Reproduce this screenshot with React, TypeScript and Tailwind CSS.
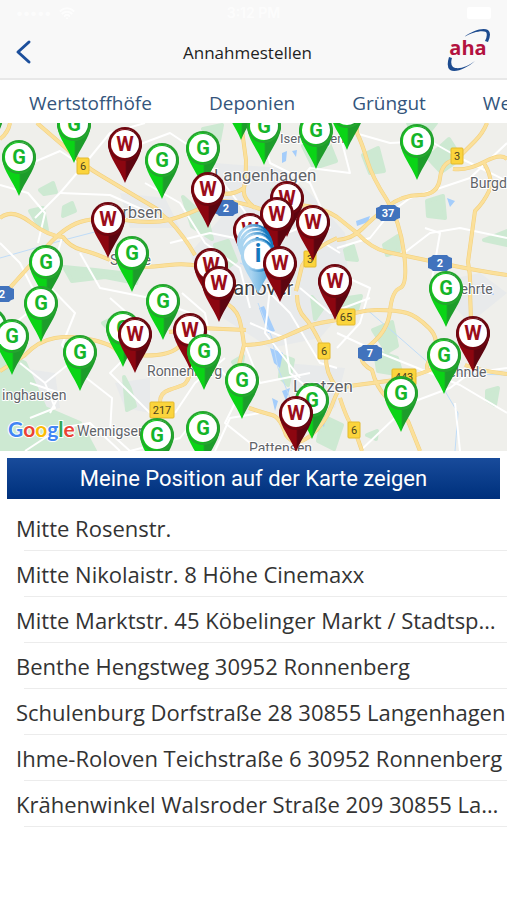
import { Wifi } from 'lucide-react';

type PinKind = 'green' | 'red' | 'info';

const tabs = ['Wertstoffhöfe', 'Deponien', 'Grüngut', 'We'];

const places = [
  'Mitte Rosenstr.',
  'Mitte Nikolaistr. 8 Höhe Cinemaxx',
  'Mitte Marktstr. 45 Köbelinger Markt / Stadtsparkasse',
  'Benthe Hengstweg 30952 Ronnenberg',
  'Schulenburg Dorfstraße 28 30855 Langenhagen',
  'Ihme-Roloven Teichstraße 6 30952 Ronnenberg',
  'Krähenwinkel Walsroder Straße 209 30855 Langenhagen',
];

// x and y are the centre of the pin's head, later entries lie on top
const pins: [PinKind, number, number][] = [
  ['green', -14, -6],
  ['green', 241, -22],
  ['green', 347, -12],
  ['green', 74, 1],
  ['green', 264, 3],
  ['green', 316, 7],
  ['green', 417, 18],
  ['red', 125, 21],
  ['green', 203, 25],
  ['green', 19, 34],
  ['green', 162, 37],
  ['red', 208, 66],
  ['red', 287, 75],
  ['red', 277, 91],
  ['red', 108, 96],
  ['red', 313, 99],
  ['red', 250, 107],
  ['info', 254, 118],
  ['info', 256, 122],
  ['info', 257, 126],
  ['green', 132, 130],
  ['info', 258, 132],
  ['green', 46, 139],
  ['red', 280, 140],
  ['red', 211, 142],
  ['red', 335, 158],
  ['red', 219, 160],
  ['green', 446, 165],
  ['green', 163, 178],
  ['green', 41, 180],
  ['green', -10, 202],
  ['green', 123, 205],
  ['red', 190, 207],
  ['red', 473, 210],
  ['red', 135, 211],
  ['green', 12, 213],
  ['green', 204, 228],
  ['green', 80, 229],
  ['green', 444, 232],
  ['green', 242, 257],
  ['green', 401, 270],
  ['green', 312, 277],
  ['red', 296, 290],
  ['green', 203, 305],
  ['green', 157, 312],
];

const pinColors = {
  green: { ring: '#25a52f', letter: '#15b52a', text: 'G' },
  red: { ring: '#6d0710', letter: '#9b0d1a', text: 'W' },
  info: { ring: 'url(#ring-info)', letter: '#1377bd', text: 'i' },
};

const labels: [string, number, number, number][] = [
  ['Isernhagen', 280, 20, 13],
  ['Langenhagen', 214, 58, 17],
  ['Garbsen', 103, 95, 16],
  ['Seelze', 110, 142, 14],
  ['Burgdorf', 470, 65, 14],
  ['Lehrte', 453, 171, 14],
  ['Ronnenberg', 147, 253, 14],
  ['Sehnde', 440, 254, 14],
  ['inghausen', 2, 277, 14],
  ['Wennigsen', 77, 313, 14],
  ['Laatzen', 293, 269, 17],
  ['Pattensen', 249, 330, 14],
];

const shields: [string, number, number][] = [
  ['6', 83, 43],
  ['3', 457, 33],
  ['3', 310, 136],
  ['65', 346, 194],
  ['6', 324, 228],
  ['443', 404, 254],
  ['217', 162, 287],
  ['6', 354, 307],
];

const motorways: [string, number, number][] = [
  ['2', 226, 85],
  ['37', 388, 90],
  ['2', 440, 140],
  ['7', 370, 230],
  ['2', 2, 171],
];

const mainRoads = [
  'M10 0Q8 10 0 16',
  'M37 0L66 25Q84 43 100 52L157 86Q163 94 169 97',
  'M7 168L43 128Q62 105 80 99T125 97T169 97Q190 91 207 82T260 86T300 82Q322 84 337 94L357 110Q372 126 387 129T440 140T507 152',
  'M0 95Q12 85 30 99T63 114Q70 124 82 127T110 137T140 144T169 142T200 143L215 152',
  'M241 0L246 37Q246 55 244 65T255 85M212 66Q228 76 244 65',
  'M169 97Q184 113 195 132',
  'M337 115Q310 127 302 143L296 168',
  'M357 0L357 10Q362 20 367 37T387 77Q400 98 404 130T400 165T390 188T370 222T372 247Q376 264 387 275T408 298L420 328',
  'M337 117Q352 116 362 106T387 84T420 72T440 55T456 37L475 18Q483 10 487 0',
  'M453 46Q467 48 484 39T507 36',
  'M484 40Q494 57 489 68T475 88L468 139Q471 155 470 168L471 197',
  'M337 197Q357 187 377 187T407 190T429 205T432 232T430 247Q410 255 395 257T357 262T337 268',
  'M465 242Q480 248 507 251',
  'M340 275Q348 300 354 305L362 328',
  'M219 175Q236 185 239 195T244 222L237 250',
  'M169 209L200 205L246 207',
  'M244 222Q266 222 286 213T312 202T337 197',
  'M297 172Q297 187 305 195T326 232Q325 250 337 265',
  'M249 285Q264 290 272 292T286 312Q295 325 310 313T332 282T340 270',
  'M160 279Q160 270 169 267T183 262T192 245',
  'M0 248L25 232Q38 218 55 215T93 217T117 228Q135 234 157 232T185 215',
];

const minorRoads = [
  'M20 45L60 28L83 43L60 70L35 95',
  'M60 70L110 72L150 90M83 43L110 10L145 0',
  'M0 62L28 70L45 90L38 120',
  'M62 115L48 162L75 190L62 222L80 250L112 275L110 310L130 328',
  'M80 130L100 165L150 175L190 190',
  'M0 120L20 140L40 180L0 212',
  'M110 175L150 210L110 250L150 290',
  'M130 25L170 10L200 30L235 75L260 110',
  'M145 60L180 80L205 120L240 145L250 185',
  'M170 120L210 110L260 120L300 105L340 130',
  'M260 0L270 40L310 60L330 105',
  'M285 75L310 45L350 50L337 0',
  'M355 10L390 20L430 18L460 35L507 58',
  'M337 125L370 115L390 90L410 75L470 55L507 20',
  'M404 130L430 110L460 105L507 115',
  'M430 168L440 110L425 105',
  'M337 150L370 165L360 200L337 225',
  'M337 210L380 230L430 250L460 262L507 290',
  'M410 280L450 265L470 250L507 245',
  'M360 328L400 290L410 255M455 280L460 328',
  'M182 170L205 190L215 240L240 270L225 300L260 328',
  'M250 200L285 215L290 250L320 275',
  'M265 165L290 190L320 240L337 245M300 165L330 190L370 175',
  'M245 222L260 260L310 250M270 165L265 210L300 255',
  'M175 290L195 260L225 235M215 328L230 295L260 290',
  'M45 260L70 240L85 225M20 240L45 260L55 285L30 295',
  'M30 260L60 270L50 290',
  'M25 328L60 305L90 300L120 328',
  'M130 328L180 315L200 290',
];

function Pin({ kind, x, y }: { kind: PinKind; x: number; y: number }) {
  const { ring, letter, text } = pinColors[kind];
  // heads outside the map only show their tip
  const hasLetter = x > 0 && y > 0;
  return (
    <g transform={`translate(${x} ${y})`}>
      <path d="M-17 2C-15 15-6 24 0 39C6 24 15 15 17 2A17 17 0 1 0-17 2Z" fill={`url(#pin-${kind})`} />
      <circle r="16" fill="none" stroke={ring} strokeWidth="2" />
      <circle r="14" fill="#fff" />
      {hasLetter ? (
        <text y="7" textAnchor="middle" fontSize={kind === 'info' ? 25 : 20} fontWeight="700" fill={letter}>
          {text}
        </text>
      ) : null}
    </g>
  );
}

function AhaLogo() {
  return (
    <svg viewBox="0 0 44 44" className="h-11 w-11" role="img" aria-label="aha">
      <path d="M17 9C25 3 36-1 41 2Q45 5 41 14L38 13Q41 7 39 4C35 2 26 4 17 9Z" fill="#1d4b8f" />
      <path d="M28 33C20 40 9 45 3 42Q-1 39 2 29L5 30Q3 36 6 39C11 42 20 39 28 33Z" fill="#1d4b8f" />
      <text x="21" y="27" textAnchor="middle" fontSize="20" fontWeight="700" fill="#b3123f" className="font-['Open_Sans',sans-serif]">
        aha
      </text>
    </svg>
  );
}

function StationMap() {
  return (
    <svg
      viewBox="0 0 507 328"
      preserveAspectRatio="xMidYMid slice"
      className="block h-[328px] w-full font-[Roboto,sans-serif]"
      role="img"
      aria-label="Karte der Annahmestellen"
    >
      <defs>
        <linearGradient id="pin-green">
          <stop offset="0.5" stopColor="#0ad416" />
          <stop offset="0.55" stopColor="#1d9c2b" />
        </linearGradient>
        <linearGradient id="pin-red">
          <stop offset="0.5" stopColor="#8c0610" />
          <stop offset="0.55" stopColor="#5c0510" />
        </linearGradient>
        <linearGradient id="pin-info">
          <stop offset="0.3" stopColor="#a9d4f0" />
          <stop offset="0.8" stopColor="#5aa9dc" />
        </linearGradient>
        <linearGradient id="ring-info">
          <stop offset="0.2" stopColor="#a9d4f0" />
          <stop offset="0.8" stopColor="#1377bd" />
        </linearGradient>
      </defs>
      <rect width="507" height="328" fill="#efefeb" />

      {/* built-up areas */}
      <path
        d="M215 40L280 45L310 70L345 110L350 180L320 215L270 225L215 190L190 130L225 90ZM120 70L165 75L180 105L130 105ZM430 160L480 150L507 170L470 200ZM285 240L345 245L335 285L300 290ZM115 260L150 255L150 290L125 285ZM20 245L55 250L60 285L30 290Z"
        fill="#e8eaeb"
      />

      {/* woods and parks */}
      <g fill="#cde9d2" stroke="#cde9d2" strokeWidth="4" strokeLinejoin="round">
        <path d="M0 227L25 240L45 285L80 300L95 328L0 328Z" />
        <path d="M40 67L53 60L56 69L44 71ZM64 84L72 80L75 88L63 93ZM30 88L43 85L47 107L40 105Z" />
        <path d="M64 144L95 147L138 152L136 160L105 154L72 158Z" />
        <path d="M103 200L118 193L125 204L110 207ZM124 254L130 266L135 283L127 287Z" />
        <path d="M183 74L207 96L212 116L192 103ZM215 122L228 118L236 138L224 147Z" />
        <path d="M363 32L378 25L384 48L370 50ZM428 35L449 16L461 35L441 49Z" />
        <path d="M427 78L443 73L445 95L428 93ZM345 127L353 123L357 137L347 136ZM384 122L398 113L399 128L387 132Z" />
        <path d="M335 177L361 173L357 187L338 183ZM373 207L392 199L397 223L387 229ZM375 228L397 235L402 252L378 248Z" />
        <path d="M408 0L436 0L429 9L412 8ZM484 117L507 108L507 122ZM487 268L498 265L495 282L487 277Z" />
        <path d="M367 312L377 308L376 316ZM323 293L342 302L334 326L318 318Z" />
        <path d="M282 233L293 237L288 262L280 254ZM233 239L243 233L241 248ZM312 174L322 186L315 196Z" />
        <path d="M203 6L222 2L219 18ZM272 67L283 63L279 77ZM303 23L328 18L336 38L314 45Z" />
      </g>

      {/* lakes and rivers */}
      <g fill="#a4cdfb">
        <path d="M259 185L264 183L275 208L268 210ZM270 225L283 230L280 245L274 240ZM282 268L290 265L286 278Z" />
        <path d="M282 30L287 28L286 38L282 40ZM292 28L297 27L296 34ZM356 98L370 93L368 99L357 103Z" />
        <path d="M272 275L278 278L275 288ZM318 298L326 294L324 304ZM480 170L490 162L494 172ZM447 75L455 78L450 84Z" />
      </g>
      <path d="M0 135L60 118L110 105M365 185L400 215L440 250L507 252M258 180L272 215L278 245L290 275M445 268L458 290L455 328M275 165L262 150L240 140" fill="none" stroke="#bfdcf8" />

      <g fill="none" stroke="#fff" strokeWidth="2" strokeLinejoin="round">
        {minorRoads.map((d) => (
          <path key={d} d={d} />
        ))}
      </g>
      <g fill="none" stroke="#f2cf7c" strokeWidth="4" strokeLinejoin="round">
        {mainRoads.map((d) => (
          <path key={d} d={d} />
        ))}
      </g>
      <g fill="none" stroke="#fbe09a" strokeWidth="3" strokeLinejoin="round">
        {mainRoads.map((d) => (
          <path key={d} d={d} />
        ))}
      </g>

      <g fill="#5f6368" stroke="#fff" strokeWidth="2" strokeLinejoin="round" paintOrder="stroke">
        {labels.map(([name, x, y, size]) => (
          <text key={name} x={x} y={y} fontSize={size}>
            {name}
          </text>
        ))}
        <text x="219" y="172" fontSize="20" fill="#3c4043">
          Hanover
        </text>
      </g>

      <g fontSize="11" textAnchor="middle">
        {shields.map(([name, x, y]) => (
          <g key={`${name}-${x}`} transform={`translate(${x} ${y})`}>
            <rect x={-3 - name.length * 3} y="-8" width={6 + name.length * 6} height="16" rx="1" fill="#fbd43c" stroke="#e3b92c" />
            <text y="4" fill="#4a431f">
              {name}
            </text>
          </g>
        ))}
        {motorways.map(([name, x, y]) => (
          <g key={`${name}-${x}`} transform={`translate(${x} ${y})`}>
            <path d="M-12-5Q-8-6-7-8H7Q8-6 12-5V5Q8 6 7 8H-7Q-8 6-12 5Z" fill="#4173bd" />
            <text y="4" fontWeight="700" fill="#fff">
              {name}
            </text>
          </g>
        ))}
      </g>

      {pins.map(([kind, x, y]) => (
        <Pin key={`${x}-${y}`} kind={kind} x={x} y={y} />
      ))}

      <text x="8" y="314" fontSize="21" fontWeight="700" stroke="#fff" strokeWidth="2" paintOrder="stroke" className="font-[Lato,sans-serif]">
        <tspan fill="#4285f4">G</tspan>
        <tspan fill="#ea4335">o</tspan>
        <tspan fill="#fbbc05">o</tspan>
        <tspan fill="#4285f4">g</tspan>
        <tspan fill="#34a853">l</tspan>
        <tspan fill="#ea4335">e</tspan>
      </text>
    </svg>
  );
}

export default function App() {
  return (
    <div className="min-h-screen overflow-hidden bg-white font-['Open_Sans',sans-serif]">
      <header className="border-b-2 border-[#e8e8e8] bg-[#f8f8f8]">
        <div className="grid h-[26px] grid-cols-3 items-center px-4 font-[Inter,sans-serif] text-sm font-semibold text-white/70">
          <div className="flex items-center gap-2">
            <span>•••••</span>
            <Wifi className="size-4" strokeWidth={3} />
          </div>
          <span className="text-center">3:12 PM</span>
          <span className="h-3 w-6 justify-self-end rounded-xs bg-white" />
        </div>
        <div className="grid h-[52px] grid-cols-[1fr_auto_1fr] items-center pr-4 pl-1">
          <button type="button" aria-label="Zurück" className="justify-self-start pl-2 text-[#1c4f9c]">
            <svg viewBox="0 0 24 28" className="h-7 w-6" fill="none" stroke="currentColor" strokeWidth="3" strokeLinecap="round" strokeLinejoin="round">
              <path d="M17 4L6 14L17 24" />
            </svg>
          </button>
          <h1 className="pt-0.5 text-[17px] text-[#1f1f1f]">Annahmestellen</h1>
          <div className="justify-self-end pb-1">
            <AhaLogo />
          </div>
        </div>
      </header>

      <nav className="flex h-[43px] items-center gap-[57px] overflow-hidden pt-1 pl-[29px] text-[19px] text-[#34557c]">
        {tabs.map((tab) => (
          <a key={tab} href="#" className="shrink-0">
            {tab}
          </a>
        ))}
      </nav>

      <StationMap />

      <div className="px-[7px] pt-[7px]">
        <button type="button" className="h-[41px] w-full bg-linear-to-b from-[#184b9b] to-[#00307c] font-[Roboto,sans-serif] text-[22px] text-white">
          Meine Position auf der Karte zeigen
        </button>
      </div>

      <ul className="pt-[6px]">
        {places.map((place) => (
          <li key={place} className="text-[22px] leading-[43px] text-[#333]">
            <p className="truncate pt-0.5 pl-4">{place}</p>
            <hr className="ml-6 border-[#ececec]" />
          </li>
        ))}
      </ul>
    </div>
  );
}
